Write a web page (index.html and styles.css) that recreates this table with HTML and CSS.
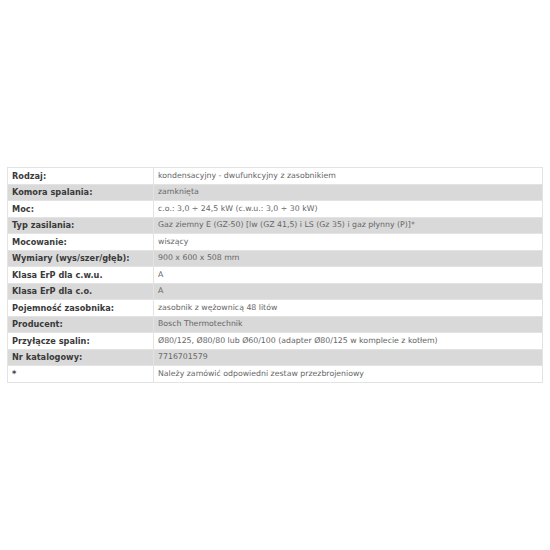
FILE: index.html
```html
<!DOCTYPE html>
<html>
<head>
<meta charset="utf-8">
<link rel="stylesheet" href="styles.css">
</head>
<body>
<table class="specs">
<tr><td class="k">Rodzaj:</td><td class="v">kondensacyjny - dwufunkcyjny z zasobnikiem</td></tr>
<tr><td class="k">Komora spalania:</td><td class="v">zamknięta</td></tr>
<tr><td class="k">Moc:</td><td class="v">c.o.: 3,0 ÷ 24,5 kW (c.w.u.: 3,0 ÷ 30 kW)</td></tr>
<tr><td class="k">Typ zasilania:</td><td class="v">Gaz ziemny E (GZ-50) [lw (GZ 41,5) i LS (Gz 35) i gaz płynny (P)]*</td></tr>
<tr><td class="k">Mocowanie:</td><td class="v">wiszący</td></tr>
<tr><td class="k">Wymiary (wys/szer/głęb):</td><td class="v">900 x 600 x 508 mm</td></tr>
<tr><td class="k">Klasa ErP dla c.w.u.</td><td class="v">A</td></tr>
<tr><td class="k">Klasa ErP dla c.o.</td><td class="v">A</td></tr>
<tr><td class="k">Pojemność zasobnika:</td><td class="v">zasobnik z wężownicą 48 litów</td></tr>
<tr><td class="k">Producent:</td><td class="v">Bosch Thermotechnik</td></tr>
<tr><td class="k">Przyłącze spalin:</td><td class="v">Ø80/125, Ø80/80 lub Ø60/100 (adapter Ø80/125 w komplecie z kotłem)</td></tr>
<tr><td class="k">Nr katalogowy:</td><td class="v">7716701579</td></tr>
<tr><td class="k">*</td><td class="v">Należy zamówić odpowiedni zestaw przezbrojeniowy</td></tr>
</table>
</body>
</html>
```
FILE: styles.css
```css
html, body {
  margin: 0;
  padding: 0;
  background: #fff;
}
body {
  padding: 167px 0 0 7px;
  font-family: "DejaVu Sans", Verdana, sans-serif;
  font-size: 7.8px;
}
.specs {
  width: 536px;
  border-collapse: collapse;
  border: 1px solid #e3e3e3;
}
.specs td {
  height: 15.5px;
  padding: 0 4px;
  border: 1px solid #e3e3e3;
  vertical-align: middle;
  line-height: 10px;
}
.specs tr:nth-child(even) td {
  background: #d9d9d9;
}
.specs .k {
  width: 137px;
  font-weight: bold;
  font-size: 8.2px;
  color: #3a3a3a;
}
.specs .v {
  color: #666;
}
```
